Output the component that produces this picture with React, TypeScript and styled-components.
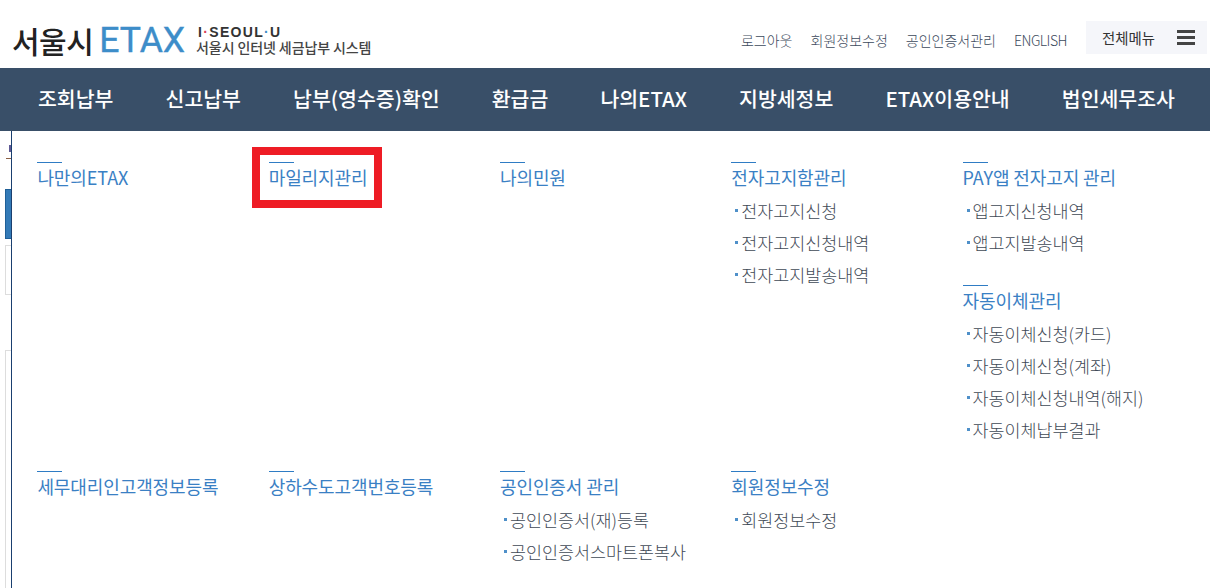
import React from "react";
import styled, { createGlobalStyle } from "styled-components";

const Global = createGlobalStyle`
  html, body { margin: 0; padding: 0; background: #fff; overflow: hidden; }
  *, *::before, *::after { box-sizing: border-box; }
  body { font-family: "Noto Sans CJK KR", "Liberation Sans", sans-serif; }
`;

const Page = styled.div`
  width: 1210px;
  height: 588px;
  display: flex;
  flex-direction: column;
  overflow: hidden;
`;

const Header = styled.header`
  height: 68px;
  flex: none;
  display: flex;
  justify-content: space-between;
  align-items: flex-start;
  padding: 21px 3px 0 12px;
`;

const Logo = styled.div`
  display: flex;
  align-items: center;
  height: 38px;
`;

const LogoKo = styled.span`
  font-size: 30px;
  line-height: 38px;
  font-weight: 500;
  color: #222;
  letter-spacing: -0.5px;
`;

const LogoEtax = styled.span`
  font-family: Roboto, "Liberation Sans", sans-serif;
  font-weight: 400;
  font-size: 35.5px;
  line-height: 38px;
  color: #3d8dc9;
  margin-left: 6px;
  -webkit-text-stroke: 0.4px #3d8dc9;
`;

const Slogan = styled.div`
  margin-left: 11px;
  display: flex;
  flex-direction: column;
  color: #333;
`;

const SloganTop = styled.span`
  font-family: "Liberation Sans", sans-serif;
  font-weight: 700;
  font-size: 14px;
  line-height: 14px;
  letter-spacing: 1.3px;
  padding-left: 2px;
`;

const SloganDot = styled.span<{ $color: string }>`
  color: ${(p) => p.$color};
`;

const SloganBottom = styled.span`
  font-size: 14px;
  line-height: 17px;
  letter-spacing: -0.1px;
  font-weight: 500;
  color: #444;
  white-space: nowrap;
`;

const Utility = styled.nav`
  display: flex;
  align-items: flex-start;
  height: 33px;
`;

const UtilityLink = styled.a<{ $latin?: boolean }>`
  font-size: 14px;
  line-height: 20px;
  margin-top: 9px;
  font-weight: 300;
  letter-spacing: ${(p) => (p.$latin ? "-0.5px" : "0")};
  color: #3c4a5c;
  margin-right: 18px;
  white-space: nowrap;
`;

const AllMenu = styled.button`
  width: 121px;
  height: 33px;
  margin-left: 1px;
  background: #f5f6fa;
  border: 0;
  display: flex;
  align-items: center;
  justify-content: space-between;
  padding: 0 12px 0 16px;
  font: 400 14.4px "Noto Sans CJK KR", sans-serif;
  color: #333;
`;

const MainNav = styled.nav`
  height: 63px;
  flex: none;
  background: #394f68;
  display: flex;
  align-items: center;
  justify-content: space-between;
  padding: 0 35px 3px 38px;
`;

const MainLink = styled.a`
  font-size: 20.5px;
  font-weight: 500;
  color: #fff;
  letter-spacing: 0;
  white-space: nowrap;
`;

const Body = styled.div`
  flex: 1;
  display: flex;
  min-height: 0;
`;

const Behind = styled.aside`
  width: 11px;
  flex: none;
  display: flex;
  flex-direction: column;
  padding: 14px 0 0 5px;
`;

const BehindGlyph = styled.div`
  width: 2px;
  height: 7px;
  margin-left: 4px;
  background: #5f5a96;
`;

const BehindRule = styled.div`
  height: 1px;
  margin: 6px 0 0 1px;
  background: #8a5f45;
`;

const BehindTab = styled.div`
  height: 50px;
  flex: none;
  margin-top: 30px;
  background: #337ab7;
  border: 1px solid #1f5f97;
  border-right: 0;
`;

const BehindBox = styled.div`
  height: 50px;
  flex: none;
  margin-top: 6px;
  border: 1px solid #ddd;
  border-right: 0;
`;

const BehindOpenBox = styled.div`
  flex: 1;
  margin-top: 55px;
  border-left: 1px solid #ddd;
  border-top: 1px solid #ddd;
`;

const Panel = styled.section`
  flex: 1;
  border-left: 1px solid #1a3f6f;
  display: grid;
  grid-template-columns: repeat(5, 231.3px);
  grid-template-rows: 309px auto;
  padding: 31px 0 0 25.4px;
`;

const Column = styled.div`
  display: flex;
  flex-direction: column;
  gap: 26px;
`;

const Group = styled.div``;

const Title = styled.h3`
  margin: 0;
  width: max-content;
  font-size: 18px;
  line-height: 28px;
  font-weight: 400;
  color: #3a80c4;
  letter-spacing: -0.1px;
  white-space: nowrap;
  &::before {
    content: "";
    display: block;
    width: 25px;
    height: 1px;
    background: #2f7cc4;
  }
`;

const Highlight = styled.div`
  position: relative;
  width: max-content;
  &::after {
    content: "";
    position: absolute;
    left: -17px;
    top: -15px;
    width: 130px;
    height: 61px;
    border: 8px solid #ee1c25;
    pointer-events: none;
  }
`;

const Items = styled.ul`
  list-style: none;
  margin: 4px 0 0;
  padding: 0;
`;

const Item = styled.li`
  height: 32px;
  line-height: 32px;
  font-size: 17.4px;
  font-weight: 300;
  color: #3f4a56;
  white-space: nowrap;
  padding-left: 10px;
  position: relative;
  &::before {
    content: "";
    position: absolute;
    left: 4px;
    top: 14px;
    width: 3px;
    height: 3px;
    background: #4f90c9;
  }
`;

const nav = ["조회납부", "신고납부", "납부(영수증)확인", "환급금", "나의ETAX", "지방세정보", "ETAX이용안내", "법인세무조사"];
const top = ["로그아웃", "회원정보수정", "공인인증서관리"];

const MenuGroup = ({ title, items }: { title: string; items?: string[] }) => (
  <Group>
    <Title>{title}</Title>
    {items && <Items>{items.map((i) => <Item key={i}>{i}</Item>)}</Items>}
  </Group>
);

export default function App() {
  return (
    <Page>
      <Global />
      <Header>
        <Logo>
          <LogoKo>서울시</LogoKo>
          <LogoEtax>ETAX</LogoEtax>
          <Slogan>
            <SloganTop>I<SloganDot $color="#d9425a">·</SloganDot>SEOUL<SloganDot $color="#3d8dc9">·</SloganDot>U</SloganTop>
            <SloganBottom>서울시 인터넷 세금납부 시스템</SloganBottom>
          </Slogan>
        </Logo>
        <Utility>
          {top.map((t) => <UtilityLink key={t}>{t}</UtilityLink>)}
          <UtilityLink $latin>ENGLISH</UtilityLink>
          <AllMenu>
            전체메뉴
            <svg width="18" height="15" viewBox="0 0 18 15">
              <path d="M0 1.5h18M0 7.5h18M0 13.5h18" stroke="#444" strokeWidth="3" />
            </svg>
          </AllMenu>
        </Utility>
      </Header>
      <MainNav>{nav.map((n) => <MainLink key={n}>{n}</MainLink>)}</MainNav>
      <Body>
        <Behind>
          <BehindGlyph />
          <BehindRule />
          <BehindTab />
          <BehindBox />
          <BehindOpenBox />
        </Behind>
        <Panel>
          <Column><MenuGroup title="나만의ETAX" /></Column>
          <Column><Highlight><MenuGroup title="마일리지관리" /></Highlight></Column>
          <Column><MenuGroup title="나의민원" /></Column>
          <Column><MenuGroup title="전자고지함관리" items={["전자고지신청", "전자고지신청내역", "전자고지발송내역"]} /></Column>
          <Column>
            <MenuGroup title="PAY앱 전자고지 관리" items={["앱고지신청내역", "앱고지발송내역"]} />
            <MenuGroup title="자동이체관리" items={["자동이체신청(카드)", "자동이체신청(계좌)", "자동이체신청내역(해지)", "자동이체납부결과"]} />
          </Column>
          <Column><MenuGroup title="세무대리인고객정보등록" /></Column>
          <Column><MenuGroup title="상하수도고객번호등록" /></Column>
          <Column><MenuGroup title="공인인증서 관리" items={["공인인증서(재)등록", "공인인증서스마트폰복사"]} /></Column>
          <Column><MenuGroup title="회원정보수정" items={["회원정보수정"]} /></Column>
        </Panel>
      </Body>
    </Page>
  );
}
